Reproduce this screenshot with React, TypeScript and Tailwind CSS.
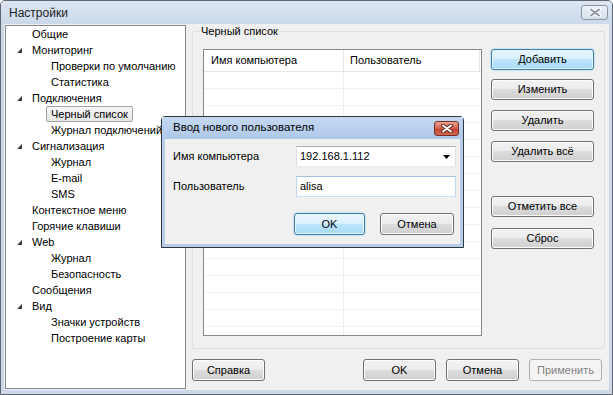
import React from "react";

type Node = { label: string; level: 0 | 1; open?: boolean; selected?: boolean };

const tree: Node[] = [
  { label: "Общие", level: 0 },
  { label: "Мониторинг", level: 0, open: true },
  { label: "Проверки по умолчанию", level: 1 },
  { label: "Статистика", level: 1 },
  { label: "Подключения", level: 0, open: true },
  { label: "Черный список", level: 1, selected: true },
  { label: "Журнал подключений", level: 1 },
  { label: "Сигнализация", level: 0, open: true },
  { label: "Журнал", level: 1 },
  { label: "E-mail", level: 1 },
  { label: "SMS", level: 1 },
  { label: "Контекстное меню", level: 0 },
  { label: "Горячие клавиши", level: 0 },
  { label: "Web", level: 0, open: true },
  { label: "Журнал", level: 1 },
  { label: "Безопасность", level: 1 },
  { label: "Сообщения", level: 0 },
  { label: "Вид", level: 0, open: true },
  { label: "Значки устройств", level: 1 },
  { label: "Построение карты", level: 1 },
];

const btnStyles = {
  normal:
    "border-[#707070] bg-[linear-gradient(#f2f2f2_0%,#ebebeb_49%,#dddddd_50%,#cfcfcf_100%)] shadow-[inset_0_0_0_1px_#fcfcfc] text-black",
  primary:
    "border-[#3c7fb1] bg-[linear-gradient(#eaf6fd_0%,#d9f0fc_49%,#bee6fd_50%,#a7d9f5_100%)] shadow-[inset_0_0_0_1px_#e8f5fd,0_0_2px_#7cc1ea] text-black",
  disabled: "border-[#adb2b5] bg-[#f4f4f4] text-[#838383]",
};

const Btn = ({
  children,
  className = "",
  variant = "normal",
}: {
  children: React.ReactNode;
  className?: string;
  variant?: keyof typeof btnStyles;
}) => (
  <div
    className={`flex shrink-0 items-center justify-center rounded-[3px] border leading-none ${btnStyles[variant]} ${className}`}
  >
    {children}
  </div>
);

const Arrow = () => (
  <svg width="5" height="5" viewBox="0 0 5 5">
    <polygon points="5,0 5,5 0,5" fill="#3a3a3a" />
  </svg>
);

const CloseX = ({ color, outline }: { color: string; outline: string }) => (
  <svg width="12" height="9" viewBox="0 0 12 9">
    <path d="M2 1.5 L10 7.5 M10 1.5 L2 7.5" stroke={outline} strokeWidth="4" strokeLinecap="round" />
    <path d="M2 1.5 L10 7.5 M10 1.5 L2 7.5" stroke={color} strokeWidth="2" strokeLinecap="round" />
  </svg>
);

const App = () => {
  const rows = Array.from({ length: 16 });

  return (
    <div className="relative flex h-[395px] w-[613px] flex-col overflow-hidden rounded-t-[5px] border border-[#5f6670] bg-[#cbd9ea] font-['Liberation_Sans',Arial,sans-serif] text-[11px] text-black">
      {/* Title bar */}
      <div className="flex h-[23px] shrink-0 items-center justify-between bg-[linear-gradient(#dce6f3,#cbd9ea)] pl-[8px] pr-[4px]">
        <span className="text-[12px] text-[#1e1e1e]">Настройки</span>
        <div className="flex h-[15px] w-[27px] items-center justify-center rounded-[3px] border border-[#8c96a5] bg-[linear-gradient(#eef3f9,#d3deec)]">
          <CloseX color="#8a939e" outline="#ffffff" />
        </div>
      </div>

      {/* Body */}
      <div className="mx-[3px] mb-[4px] flex flex-1 bg-[#f0f0f0]">
        {/* Tree */}
        <div className="my-[1px] ml-[1px] w-[181px] overflow-hidden border border-[#828790] bg-white">
          {tree.map((n, i) => (
            <div key={i} className="flex h-[16px] items-center whitespace-nowrap">
              {n.level === 0 ? (
                <div className="flex w-[21px] shrink-0 items-center pl-[11px] pt-[1px]">{n.open && <Arrow />}</div>
              ) : (
                <div className="w-[40px] shrink-0" />
              )}
              <span
                className={
                  n.selected
                    ? "rounded-[2px] border border-[#a4a4a4] bg-[linear-gradient(#f7f7f7,#e6e6e6)] px-[4px] leading-[14px]"
                    : "border border-transparent px-[4px] leading-[14px]"
                }
              >
                {n.label}
              </span>
            </div>
          ))}
        </div>

        {/* Right side */}
        <div className="ml-[6px] flex w-[412px] flex-col">
          <fieldset className="mt-[1px] rounded-[3px] border border-[#d5dfe5] px-[10px] pb-[12px] pt-[11px]">
            <legend className="ml-[-3px] px-[1px] leading-[13px]">Черный список</legend>
            <div className="flex gap-[9px]">
              {/* List */}
              <div className="h-[287px] w-[279px] overflow-hidden border border-[#828790] bg-white">
                <div className="flex h-[22px] border-b border-[#e5e5e5]">
                  <div className="flex w-[140px] items-center border-r border-[#e5e5e5] pl-[7px]">Имя компьютера</div>
                  <div className="flex w-[136px] items-center border-r border-[#e5e5e5] pl-[6px]">Пользователь</div>
                </div>
                {rows.map((_, i) => (
                  <div key={i} className="flex h-[17px]">
                    <div className="w-[140px] border-b border-r border-[#f0f0f0]" />
                    <div className="w-[136px] border-b border-[#f0f0f0]" />
                  </div>
                ))}
              </div>

              {/* Buttons */}
              <div className="flex w-[103px] flex-col">
                <Btn variant="primary" className="h-[21px]">Добавить</Btn>
                <Btn className="mt-[9px] h-[21px]">Изменить</Btn>
                <Btn className="mt-[10px] h-[21px]">Удалить</Btn>
                <Btn className="mt-[10px] h-[21px]">Удалить всё</Btn>
                <Btn className="mt-[34px] h-[21px]">Отметить все</Btn>
                <Btn className="mt-[11px] h-[21px]">Сброс</Btn>
              </div>
            </div>
          </fieldset>

          <div className="mt-[10px] flex justify-between pr-[2px]">
            <Btn className="h-[22px] w-[73px]">Справка</Btn>
            <div className="flex gap-[10px]">
              <Btn className="h-[22px] w-[73px]">OK</Btn>
              <Btn className="h-[22px] w-[73px]">Отмена</Btn>
              <Btn variant="disabled" className="h-[22px] w-[73px]">Применить</Btn>
            </div>
          </div>
        </div>
      </div>

      {/* Modal dialog */}
      <div className="absolute left-[160px] top-[115px] flex h-[132px] w-[303px] flex-col rounded-t-[4px] border border-[#2e3640] bg-[#b7cdea]">
        <div className="flex h-[22px] shrink-0 items-center justify-between bg-[linear-gradient(#c4d8f2,#afc8e9)] pl-[11px] pr-[4px]">
          <span className="text-[11.5px] text-black">Ввод нового пользователя</span>
          <div className="flex h-[15px] w-[25px] items-center justify-center rounded-[3px] border border-[#7a2e23] bg-[linear-gradient(#e8a493,#d0604b_50%,#c0412c_51%,#d26a55)]">
            <CloseX color="#ffffff" outline="#6a2a20" />
          </div>
        </div>
        <div className="mx-[3px] mb-[3px] flex flex-1 flex-col bg-[#f0f0f0] pl-[8px] pr-[4px] pt-[7px]">
          <div className="flex items-center">
            <span className="w-[123px]">Имя компьютера</span>
            <div className="flex h-[21px] w-[160px] items-center justify-between border border-[#abadb3] border-b-[#e3e9ef] border-x-[#dbdfe6] bg-white pl-[3px] pr-[5px]">
              <span>192.168.1.112</span>
              <svg width="7" height="4" viewBox="0 0 7 4">
                <polygon points="0,0 7,0 3.5,4" fill="#000" />
              </svg>
            </div>
          </div>
          <div className="mt-[9px] flex items-center">
            <span className="w-[123px]">Пользователь</span>
            <div className="flex h-[21px] w-[160px] items-center border border-[#a7c3e3] border-b-[#cfe0f1] border-x-[#c3d7ee] bg-white pl-[3px]">
              alisa
            </div>
          </div>
          <div className="mt-[16px] flex pl-[121px]">
            <Btn variant="primary" className="h-[22px] w-[71px]">OK</Btn>
            <Btn className="ml-[15px] h-[22px] w-[74px]">Отмена</Btn>
          </div>
        </div>
      </div>
    </div>
  );
};

export default App;
